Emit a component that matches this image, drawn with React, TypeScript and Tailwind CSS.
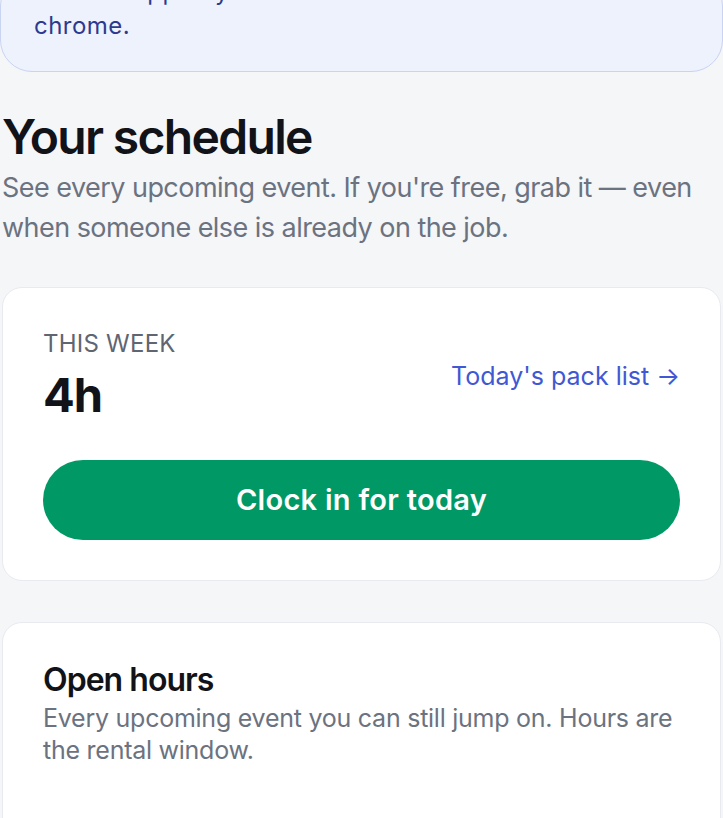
export default function App() {
  return (
    <main className="min-h-screen w-full overflow-hidden bg-[#f5f6f8] px-[2px] font-['Inter','Noto_Sans',sans-serif]">
      {/* notice card, scrolled mostly out of view */}
      <div className="-mx-[2px] -mt-[26px] rounded-[32px] border border-[#c9d3f2] bg-[#eef2fd] px-[33px] pb-[28px] text-[24px] leading-[34px] tracking-[0.02em] text-[#2d3a8c]">
        <p className="whitespace-nowrap">Add the app to your home screen to hide the</p>
        <p>chrome.</p>
      </div>

      <section className="mt-[37px]">
        <h1 className="text-[48px] font-semibold leading-[56px] tracking-[-0.035em] text-[#111318]">
          Your schedule
        </h1>
        <p className="mt-[3px] text-[27px] leading-[40px] tracking-[-0.02em] text-[#6b7280]">
          See every upcoming event. If you're free, grab it — even when someone else is already on the job.
        </p>
      </section>

      <div className="mt-[39px] rounded-[20px] border border-[#e8eaef] bg-white px-[40px] pb-[40px] pt-[42px]">
        <div className="flex items-center justify-between">
          <div>
            <div className="text-[24px] uppercase leading-[28px] tracking-[0.01em] text-[#5f6571]">
              This week
            </div>
            <div className="mt-[9px] text-[47px] font-bold leading-[56px] tracking-[-0.02em] text-[#111318]">
              4h
            </div>
          </div>
          <a className="pb-[2px] text-[25px] leading-[30px] text-[#4058d4]">
            Today's pack list →
          </a>
        </div>
        <button className="mt-[37px] flex h-[80px] w-full items-center justify-center rounded-full bg-[#009966] text-[29px] font-semibold tracking-[0.01em] text-white">
          Clock in for today
        </button>
      </div>

      <div className="mt-[41px] rounded-t-[20px] border border-[#e8eaef] bg-white px-[40px] pb-[60px] pt-[35px]">
        <h2 className="text-[32px] font-semibold leading-[44px] tracking-[-0.03em] text-[#111318]">
          Open hours
        </h2>
        <p className="text-[25px] leading-[32px] tracking-[-0.01em] text-[#6b7280]">
          Every upcoming event you can still jump on. Hours are the rental window.
        </p>
      </div>
    </main>
  )
}
